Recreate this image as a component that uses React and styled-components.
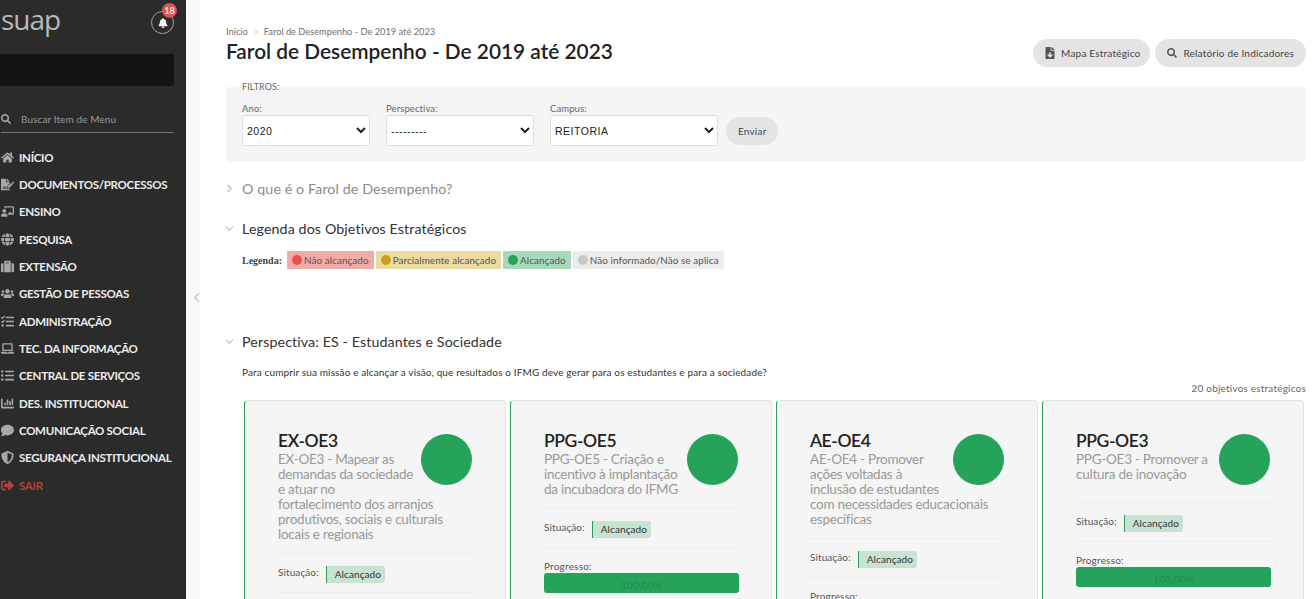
import React from 'react';
import styled, { createGlobalStyle } from 'styled-components';
import {
  FaBell, FaChalkboardTeacher, FaChartBar, FaComment, FaFileDownload, FaFileSignature,
  FaGlobe, FaHome, FaLaptop, FaListUl, FaSearch, FaShieldAlt, FaSignOutAlt, FaSuitcase,
  FaTasks, FaUsers,
} from 'react-icons/fa';
import { FiChevronDown, FiChevronLeft, FiChevronRight } from 'react-icons/fi';

const Global = createGlobalStyle`
  html, body { margin: 0; padding: 0; height: 100%; overflow: hidden; background: #fff; }
  body { font-family: Lato, "Liberation Sans", sans-serif; color: #222; }
  * { box-sizing: border-box; }
`;

const Page = styled.div`
  display: flex;
  height: 100vh;
  overflow: hidden;
`;

const Sidebar = styled.aside`
  flex: 0 0 186px;
  background: #2b2b2b;
  display: flex;
  flex-direction: column;
`;

const SideTop = styled.div`
  height: 54px;
  display: flex;
  justify-content: space-between;
  padding: 3px 12px 0 1px;
`;

const Logo = styled.div`
  font-family: "Open Sans", sans-serif;
  font-size: 28px;
  line-height: 32px;
  letter-spacing: -1px;
  color: #b9b9b9;
`;

const BellRing = styled.div`
  position: relative;
  width: 23px;
  height: 23px;
  margin-top: 8px;
  border: 1px solid #a5a5a5;
  border-radius: 50%;
  display: flex;
  align-items: center;
  justify-content: center;
  color: #fff;
  font-size: 10px;
`;

const Badge = styled.span`
  position: absolute;
  top: -9px;
  right: -4px;
  width: 15px;
  height: 15px;
  border-radius: 50%;
  background: #d9534f;
  color: #f3dede;
  font-size: 9px;
  font-weight: 700;
  line-height: 15px;
  text-align: center;
`;

const Redacted = styled.div`
  height: 32px;
  width: 174px;
  background: #131313;
  border-radius: 0 3px 3px 0;
`;

const SearchRow = styled.div`
  height: 28px;
  width: 173px;
  margin: 19px 0 0 1px;
  border-bottom: 1px solid #747474;
  display: flex;
  align-items: center;
  gap: 10px;
  font-size: 10px;
  letter-spacing: 0.1px;
  color: #9a9a9a;
  & > svg { font-size: 10px; color: #a5a5a5; }
`;

const Menu = styled.nav`
  display: flex;
  flex-direction: column;
  margin-top: 10.5px;
`;

const MenuItem = styled.a`
  height: 27.35px;
  display: flex;
  align-items: center;
  font-size: 11.5px;
  font-weight: 700;
  letter-spacing: -0.3px;
  color: ${p => (p.$danger ? '#b8413c' : '#ececec')};
  & > span {
    flex: 0 0 19px;
    display: flex;
    align-items: center;
    padding-left: 1px;
    font-size: 13px;
    color: ${p => (p.$danger ? '#b8413c' : '#a8a8a8')};
  }
`;

const Gutter = styled.div`
  flex: 0 0 14px;
  min-width: 0;
  background: #f9f9f9;
  display: flex;
  align-items: flex-start;
  padding: 290px 0 0 3px;
  color: #c4c4c4;
  font-size: 15px;
  & > svg { flex: none; }
`;

const Main = styled.main`
  flex: 1;
  min-width: 0;
  padding: 26px 6px 0 26px;
`;

const Crumbs = styled.div`
  display: flex;
  align-items: center;
  gap: 4px;
  font-size: 9.25px;
  line-height: 12px;
  color: #6f6f6f;
  & > svg { font-size: 8px; color: #aaa; }
`;

const Header = styled.div`
  display: flex;
  justify-content: space-between;
  align-items: flex-start;
  height: 49px;
`;

const Title = styled.h1`
  margin: 0;
  font-size: 20.85px;
  line-height: 26px;
  font-weight: 600;
  color: #222;
`;

const Actions = styled.div`
  display: flex;
  gap: 5px;
  margin-top: 1px;
`;

const Pill = styled.button`
  height: 28px;
  border: 0;
  border-radius: 14px;
  background: #e4e4e4;
  padding: ${p => p.$padding || '0 12px'};
  display: flex;
  align-items: center;
  gap: ${p => p.$gap || '6px'};
  font-family: inherit;
  font-size: 10px;
  letter-spacing: 0.2px;
  color: #444;
  & > svg { font-size: ${p => p.$iconSize || '10px'}; color: #555; }
`;

const Filters = styled.form`
  display: flow-root;
  height: 75px;
  background: #f5f5f5;
  border-radius: 3px;
  padding: 0 16px;
`;

const FilterLegend = styled.div`
  font-size: 9px;
  line-height: 10px;
  margin-top: -5px;
  letter-spacing: 0.1px;
  color: #666;
`;

const FilterRow = styled.div`
  display: flex;
  align-items: flex-end;
  gap: 16px;
  margin-top: 11px;
`;

const Field = styled.label`
  display: flex;
  flex-direction: column;
  gap: 1px;
  font-size: 9.5px;
  line-height: 11px;
  letter-spacing: 0.1px;
  color: #666;
`;

const Select = styled.select`
  width: ${p => p.$width}px;
  height: 31px;
  background: #fff;
  border: 1px solid #dedede;
  border-radius: 3px;
  padding: 0;
  font-family: "Liberation Sans", sans-serif;
  font-size: 10.5px;
  letter-spacing: 0.5px;
  color: #222;
`;

const SendButton = styled(Pill)`
  margin: 0 0 1px -8px;
  padding: 0 12px;
  font-size: 10px;
`;

const Section = styled.div`
  display: flex;
  align-items: center;
  height: 20px;
  margin: ${p => p.$margin};
  font-size: 14.25px;
  letter-spacing: 0.1px;
  color: ${p => (p.$muted ? '#8b8b8b' : '#333')};
  & > svg { flex: none; margin: 0 6px 0 -3px; font-size: 13px; color: #bdbdbd; }
`;

const LegendRow = styled.div`
  display: flex;
  align-items: center;
  gap: 2px;
  margin: 13px 0 0 16px;
  height: 18px;
`;

const LegendLabel = styled.strong`
  font-family: "Liberation Serif", serif;
  font-size: 10px;
  color: #444;
  margin-right: 3px;
`;

const LegendChip = styled.span`
  height: 18px;
  padding: 0 5px;
  display: flex;
  align-items: center;
  gap: 2px;
  background: ${p => p.$bg};
  font-size: 9.85px;
  letter-spacing: 0.1px;
  color: #555;
  &::before {
    content: '';
    width: 10px;
    height: 10px;
    border-radius: 50%;
    background: ${p => p.$dot};
  }
`;

const Question = styled.p`
  margin: 15px 0 0 16px;
  font-size: 10px;
  line-height: 12px;
  letter-spacing: 0.13px;
  color: #333;
`;

const Count = styled.div`
  text-align: right;
  margin-top: 4px;
  font-size: 10px;
  line-height: 12px;
  letter-spacing: 0.2px;
  color: #666;
`;

const Cards = styled.div`
  display: grid;
  grid-template-columns: repeat(4, 262px);
  column-gap: 4px;
  margin: 6px 0 0 18px;
`;

const Card = styled.article`
  height: 340px;
  background: #f5f5f5;
  border: 1px solid #e3e3e3;
  border-left: 1px solid #2a9d5c;
  border-radius: 4px;
  padding: 29px 33px 0 33px;
`;

const Head = styled.div`
  min-height: 72px;
  &::after { content: ''; display: block; clear: both; }
`;

const Circle = styled.div`
  float: right;
  width: 51px;
  height: 51px;
  margin: 4px 0 0 6px;
  border-radius: 50%;
  background: #26a35a;
`;

const Code = styled.h3`
  margin: 0;
  font-size: 17.5px;
  line-height: 22px;
  font-weight: 600;
  letter-spacing: -0.4px;
  color: #222;
`;

const Desc = styled.p`
  margin: 0;
  padding-bottom: 11px;
  font-size: 13.5px;
  line-height: 15px;
  letter-spacing: -0.26px;
  color: #999;
`;

const Row = styled.div`
  display: flex;
  align-items: flex-start;
  gap: 7px;
  border-top: 1px solid #ececec;
  padding: 12px 0 9px;
  font-size: 10px;
  line-height: 12px;
  letter-spacing: 0.1px;
  color: #555;
`;

const Status = styled.span`
  height: 17px;
  padding: 0 4px 0 8px;
  border-left: 1px solid #2a9d5c;
  border-radius: 0 3px 3px 0;
  background: #c9e3d3;
  font-size: 10px;
  line-height: 17px;
  color: #333;
`;

const ProgressBlock = styled.div`
  border-top: 1px solid #ececec;
  padding-top: 12px;
  font-size: 10px;
  line-height: 12px;
  letter-spacing: 0.2px;
  color: #555;
`;

const Bar = styled.div`
  margin-top: 1px;
  width: 195px;
  height: 20px;
  border-radius: 3px;
  background: #26a35a;
  color: #1f8a4c;
  font-size: 10px;
  line-height: 24px;
  text-align: center;
`;

const menu = [
  [FaHome, 'INÍCIO'],
  [FaFileSignature, 'DOCUMENTOS/PROCESSOS'],
  [FaChalkboardTeacher, 'ENSINO'],
  [FaGlobe, 'PESQUISA'],
  [FaSuitcase, 'EXTENSÃO'],
  [FaUsers, 'GESTÃO DE PESSOAS'],
  [FaTasks, 'ADMINISTRAÇÃO'],
  [FaLaptop, 'TEC. DA INFORMAÇÃO'],
  [FaListUl, 'CENTRAL DE SERVIÇOS'],
  [FaChartBar, 'DES. INSTITUCIONAL'],
  [FaComment, 'COMUNICAÇÃO SOCIAL'],
  [FaShieldAlt, 'SEGURANÇA INSTITUCIONAL'],
];

const legend = [
  ['#f2aaa8', '#e5504b', 'Não alcançado'],
  ['#ecdba0', '#c9a21c', 'Parcialmente alcançado'],
  ['#a8d9bb', '#26a35a', 'Alcançado'],
  ['#ececec', '#c8c8c8', 'Não informado/Não se aplica'],
];

const objectives = [
  ['EX-OE3', 'EX-OE3 - Mapear as demandas da sociedade e atuar no fortalecimento dos arranjos produtivos, sociais e culturais locais e regionais'],
  ['PPG-OE5', 'PPG-OE5 - Criação e incentivo à implantação da incubadora do IFMG'],
  ['AE-OE4', 'AE-OE4 - Promover ações voltadas à inclusão de estudantes com necessidades educacionais específicas'],
  ['PPG-OE3', 'PPG-OE3 - Promover a cultura de inovação'],
];

export default function App() {
  return (
    <Page>
      <Global />
      <Sidebar>
        <SideTop>
          <Logo>suap</Logo>
          <BellRing>
            <FaBell />
            <Badge>18</Badge>
          </BellRing>
        </SideTop>
        <Redacted />
        <SearchRow>
          <FaSearch />
          Buscar Item de Menu
        </SearchRow>
        <Menu>
          {menu.map(([Icon, label]) => (
            <MenuItem key={label}>
              <span><Icon /></span>
              {label}
            </MenuItem>
          ))}
          <MenuItem $danger>
            <span><FaSignOutAlt /></span>
            SAIR
          </MenuItem>
        </Menu>
      </Sidebar>
      <Gutter><FiChevronLeft /></Gutter>
      <Main>
        <Crumbs>Início <FiChevronRight /> Farol de Desempenho - De 2019 até 2023</Crumbs>
        <Header>
          <Title>Farol de Desempenho - De 2019 até 2023</Title>
          <Actions>
            <Pill $padding="0 10px 0 11px" $gap="5px" $iconSize="12px"><FaFileDownload /> Mapa Estratégico</Pill>
            <Pill $padding="0 12px" $gap="6px"><FaSearch /> Relatório de Indicadores</Pill>
          </Actions>
        </Header>
        <Filters>
          <FilterLegend>FILTROS:</FilterLegend>
          <FilterRow>
            <Field>
              Ano:
              <Select $width={128} defaultValue="2020"><option>2020</option></Select>
            </Field>
            <Field>
              Perspectiva:
              <Select $width={148}><option>---------</option></Select>
            </Field>
            <Field>
              Campus:
              <Select $width={168}><option>REITORIA</option></Select>
            </Field>
            <SendButton type="button">Enviar</SendButton>
          </FilterRow>
        </Filters>
        <Section $muted $margin="16px 0 0"><FiChevronRight />O que é o Farol de Desempenho?</Section>
        <Section $margin="20px 0 0"><FiChevronDown />Legenda dos Objetivos Estratégicos</Section>
        <LegendRow>
          <LegendLabel>Legenda:</LegendLabel>
          {legend.map(([bg, dot, label]) => (
            <LegendChip key={label} $bg={bg} $dot={dot}>{label}</LegendChip>
          ))}
        </LegendRow>
        <Section $margin="62px 0 0"><FiChevronDown />Perspectiva: ES - Estudantes e Sociedade</Section>
        <Question>Para cumprir sua missão e alcançar a visão, que resultados o IFMG deve gerar para os estudantes e para a sociedade?</Question>
        <Count>20 objetivos estratégicos</Count>
        <Cards>
          {objectives.map(([code, desc]) => (
            <Card key={code}>
              <Head>
                <Circle />
                <Code>{code}</Code>
                <Desc>{desc}</Desc>
              </Head>
              <Row>Situação: <Status>Alcançado</Status></Row>
              <ProgressBlock>
                Progresso:
                <Bar>100,00%</Bar>
              </ProgressBlock>
            </Card>
          ))}
        </Cards>
      </Main>
    </Page>
  );
}
